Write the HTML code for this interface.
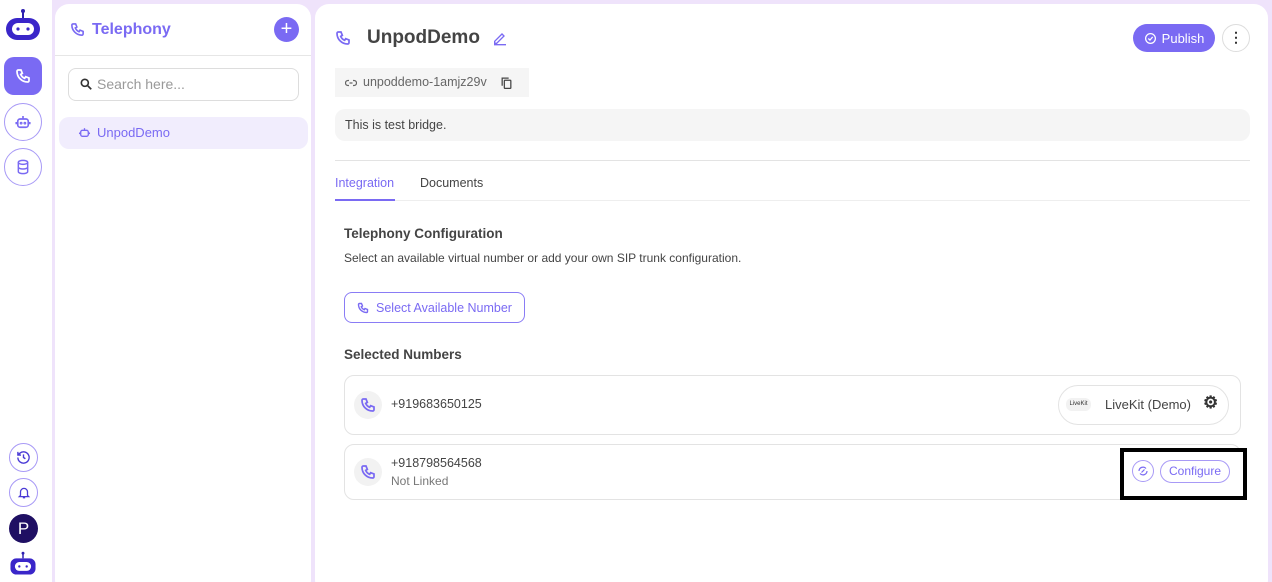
<!DOCTYPE html><html><head><style>
*{box-sizing:border-box;margin:0;padding:0}
html,body{width:1272px;height:582px;overflow:hidden}
body{background:#efe3fb;font-family:"Liberation Sans",sans-serif;position:relative;color:#333}
.a{position:absolute}
.rail{left:0;top:0;width:52px;height:582px;background:#fff}
.circ{border:1.5px solid #a89af6;border-radius:50%;background:#fff;display:flex;align-items:center;justify-content:center}
.panel{background:#fff;border-radius:14px}
svg{display:block}
</style></head><body>
<div class="a rail"></div>
<svg class="a" style="left:4px;top:8px" width="38" height="34" viewBox="0 0 38 34"><line x1="19" y1="2" x2="19" y2="10" stroke="#2d1fb0" stroke-width="2"/><circle cx="19" cy="3" r="2" fill="#2d1fb0"/><rect x="2" y="10" width="34" height="22" rx="11" fill="#3a26c9"/><rect x="8" y="15" width="22" height="12" rx="6" fill="#fff"/><circle cx="14" cy="21" r="1.6" fill="#3a26c9"/><circle cx="24" cy="21" r="1.6" fill="#3a26c9"/></svg>
<div class="a" style="left:4px;top:57px;width:38px;height:38px;border-radius:10px;background:#7a6af3;display:flex;align-items:center;justify-content:center"><svg width="16" height="16" viewBox="0 0 24 24" fill="none" stroke="#fff" stroke-width="2.6"><path d="M5 3h4l2 5-2.5 1.5a11 11 0 0 0 6 6L16 13l5 2v4a2 2 0 0 1-2 2A16 16 0 0 1 3 5a2 2 0 0 1 2-2"/></svg></div>
<div class="a circ" style="left:4px;top:103px;width:38px;height:38px"><svg width="18" height="18" viewBox="0 0 24 24" fill="none" stroke="#7a6af3" stroke-width="2.2"><rect x="5" y="8" width="14" height="11" rx="3"/><line x1="12" y1="4" x2="12" y2="8"/><circle cx="9.5" cy="13.5" r=".8"/><circle cx="14.5" cy="13.5" r=".8"/><line x1="3" y1="12" x2="3" y2="15"/><line x1="21" y1="12" x2="21" y2="15"/></svg></div>
<div class="a circ" style="left:4px;top:148px;width:38px;height:38px"><svg width="16" height="18" viewBox="0 0 24 24" fill="none" stroke="#7a6af3" stroke-width="2.2"><ellipse cx="12" cy="5" rx="7" ry="3"/><path d="M5 5v14c0 1.7 3 3 7 3s7-1.3 7-3V5M5 12c0 1.7 3 3 7 3s7-1.3 7-3"/></svg></div>
<div class="a circ" style="left:9px;top:443px;width:29px;height:29px"><svg width="15" height="15" viewBox="0 0 24 24" fill="none" stroke="#4b3bd6" stroke-width="2.2"><path d="M3 12a9 9 0 1 0 3-6.7L3 8M3 3v5h5M12 7v5l3 2"/></svg></div>
<div class="a circ" style="left:9px;top:478px;width:29px;height:29px"><svg width="14" height="15" viewBox="0 0 24 24" fill="none" stroke="#4b3bd6" stroke-width="2.2"><path d="M6 17V11a6 6 0 0 1 12 0v6l2 2H4zM10 21h4"/></svg></div>
<div class="a" style="left:9px;top:514px;width:29px;height:29px;border-radius:50%;background:#1f0f63;color:#fff;font-size:17px;display:flex;align-items:center;justify-content:center">P</div>
<svg class="a" style="left:9px;top:550px" width="28" height="27" viewBox="0 0 38 34"><line x1="19" y1="2" x2="19" y2="10" stroke="#2d1fb0" stroke-width="2"/><circle cx="19" cy="3" r="2" fill="#2d1fb0"/><rect x="2" y="10" width="34" height="22" rx="8" fill="#3a26c9"/><rect x="8" y="15" width="22" height="12" rx="6" fill="#fff"/><circle cx="14" cy="21" r="1.6" fill="#3a26c9"/><circle cx="24" cy="21" r="1.6" fill="#3a26c9"/></svg>

<div class="a panel" style="left:55px;top:4px;width:256px;height:590px"></div>
<svg class="a" style="left:70px;top:22px" width="15" height="15" viewBox="0 0 24 24" fill="none" stroke="#7a6af3" stroke-width="2.6"><path d="M5 3h4l2 5-2.5 1.5a11 11 0 0 0 6 6L16 13l5 2v4a2 2 0 0 1-2 2A16 16 0 0 1 3 5a2 2 0 0 1 2-2"/></svg>
<div class="a" style="left:92px;top:21px;font-size:16px;font-weight:bold;color:#7a6af3">Telephony</div>
<div class="a" style="left:274px;top:17px;width:25px;height:25px;border-radius:50%;background:#7a6af3;color:#fff;font-size:20px;line-height:24px;text-align:center">+</div>
<div class="a" style="left:55px;top:55px;width:256px;height:1px;background:#e6e6e6"></div>
<div class="a" style="left:68px;top:68px;width:231px;height:33px;border:1px solid #ddd;border-radius:8px"></div>
<svg class="a" style="left:79px;top:77px" width="14" height="14" viewBox="0 0 24 24" fill="none" stroke="#333" stroke-width="2.8"><circle cx="10" cy="10" r="6"/><line x1="15" y1="15" x2="21" y2="21"/></svg>
<div class="a" style="left:97px;top:76px;font-size:14px;color:#999">Search here...</div>
<div class="a" style="left:59px;top:117px;width:249px;height:32px;border-radius:10px;background:#f1edfd"></div>
<svg class="a" style="left:78px;top:126px" width="13" height="13" viewBox="0 0 24 24" fill="none" stroke="#7a6af3" stroke-width="2.4"><rect x="5" y="8" width="14" height="11" rx="3"/><line x1="12" y1="4" x2="12" y2="8"/><line x1="3" y1="12" x2="3" y2="15"/><line x1="21" y1="12" x2="21" y2="15"/></svg>
<div class="a" style="left:97px;top:125px;font-size:13px;color:#7a6af3">UnpodDemo</div>

<div class="a panel" style="left:315px;top:4px;width:953px;height:590px"></div>
<svg class="a" style="left:335px;top:30px" width="16" height="16" viewBox="0 0 24 24" fill="none" stroke="#7a6af3" stroke-width="2.6"><path d="M5 3h4l2 5-2.5 1.5a11 11 0 0 0 6 6L16 13l5 2v4a2 2 0 0 1-2 2A16 16 0 0 1 3 5a2 2 0 0 1 2-2"/></svg>
<div class="a" style="left:367px;top:27px;font-size:19px;font-weight:bold;color:#444">UnpodDemo</div>
<svg class="a" style="left:492px;top:30px" width="16" height="16" viewBox="0 0 24 24" fill="none" stroke="#7a6af3" stroke-width="2"><path d="M4 17l11-11 3 3-11 11H4zM3 22h18"/></svg>
<div class="a" style="left:1133px;top:24px;width:82px;height:28px;border-radius:14px;background:#7a6af3;color:#fff;font-size:13px;display:flex;align-items:center;justify-content:center;gap:5px"><svg width="13" height="13" viewBox="0 0 24 24" fill="none" stroke="#fff" stroke-width="2.3"><circle cx="12" cy="12" r="9"/><path d="M8 12l3 3 5-6"/></svg>Publish</div>
<div class="a" style="left:1222px;top:24px;width:28px;height:28px;border-radius:50%;border:1px solid #ddd;font-size:14px;text-align:center;line-height:24px;font-weight:bold">⋮</div>
<div class="a" style="left:335px;top:68px;width:194px;height:29px;background:#f5f5f5"></div>
<svg class="a" style="left:345px;top:77px" width="12" height="12" viewBox="0 0 24 24" fill="none" stroke="#666" stroke-width="2.5"><path d="M9 12h6M8 7H6a5 5 0 0 0 0 10h2M16 7h2a5 5 0 0 1 0 10h-2"/></svg>
<div class="a" style="left:363px;top:75px;font-size:12.5px;color:#666">unpoddemo-1amjz29v</div>
<svg class="a" style="left:500px;top:76px" width="13" height="14" viewBox="0 0 24 24" fill="none" stroke="#444" stroke-width="2.3"><rect x="8" y="7" width="12" height="15" rx="1"/><path d="M4 17V3h12"/></svg>
<div class="a" style="left:335px;top:109px;width:915px;height:32px;border-radius:10px;background:#f5f5f5"></div>
<div class="a" style="left:345px;top:118px;font-size:12.5px;color:#444">This is test bridge.</div>
<div class="a" style="left:335px;top:160px;width:915px;height:1px;background:#e3e3e3"></div>
<div class="a" style="left:335px;top:176px;font-size:12.5px;color:#7a6af3">Integration</div>
<div class="a" style="left:420px;top:176px;font-size:12.5px;color:#444">Documents</div>
<div class="a" style="left:335px;top:200px;width:915px;height:1px;background:#eee"></div>
<div class="a" style="left:335px;top:199px;width:60px;height:2px;background:#7a6af3"></div>
<div class="a" style="left:344px;top:226px;font-size:13.5px;font-weight:bold;color:#444">Telephony Configuration</div>
<div class="a" style="left:344px;top:251px;font-size:12px;color:#444">Select an available virtual number or add your own SIP trunk configuration.</div>
<div class="a" style="left:344px;top:292px;width:181px;height:31px;border:1px solid #8a7cf5;border-radius:8px;color:#7a6af3;font-size:12.5px;display:flex;align-items:center;justify-content:center;gap:7px"><svg width="12" height="12" viewBox="0 0 24 24" fill="none" stroke="#7a6af3" stroke-width="2.8"><path d="M5 3h4l2 5-2.5 1.5a11 11 0 0 0 6 6L16 13l5 2v4a2 2 0 0 1-2 2A16 16 0 0 1 3 5a2 2 0 0 1 2-2"/></svg>Select Available Number</div>
<div class="a" style="left:344px;top:347px;font-size:13.5px;font-weight:bold;color:#444">Selected Numbers</div>
<div class="a" style="left:344px;top:375px;width:897px;height:60px;border:1px solid #e3e3e3;border-radius:10px"></div>
<div class="a" style="left:354px;top:391px;width:28px;height:28px;border-radius:50%;background:#f2f2f2;display:flex;align-items:center;justify-content:center"><svg width="16" height="16" viewBox="0 0 24 24" fill="none" stroke="#7a6af3" stroke-width="2.6"><path d="M5 3h4l2 5-2.5 1.5a11 11 0 0 0 6 6L16 13l5 2v4a2 2 0 0 1-2 2A16 16 0 0 1 3 5a2 2 0 0 1 2-2"/></svg></div>
<div class="a" style="left:391px;top:397px;font-size:12.5px;color:#444">+919683650125</div>
<div class="a" style="left:1058px;top:385px;width:171px;height:40px;border:1px solid #e3e3e3;border-radius:20px"></div>
<div class="a" style="left:1066px;top:398px;width:25px;height:13px;background:#f2f2f2;border-radius:6px;font-size:6px;line-height:13px;text-align:center;color:#333">LiveKit</div>
<div class="a" style="left:1105px;top:397px;font-size:13px;color:#444">LiveKit (Demo)</div>
<div class="a" style="left:1203px;top:393px;font-size:17px;font-weight:bold;color:#333">⚙</div>
<div class="a" style="left:344px;top:444px;width:897px;height:56px;border:1px solid #e3e3e3;border-radius:10px"></div>
<div class="a" style="left:354px;top:458px;width:28px;height:28px;border-radius:50%;background:#f2f2f2;display:flex;align-items:center;justify-content:center"><svg width="16" height="16" viewBox="0 0 24 24" fill="none" stroke="#7a6af3" stroke-width="2.6"><path d="M5 3h4l2 5-2.5 1.5a11 11 0 0 0 6 6L16 13l5 2v4a2 2 0 0 1-2 2A16 16 0 0 1 3 5a2 2 0 0 1 2-2"/></svg></div>
<div class="a" style="left:391px;top:456px;font-size:12.5px;color:#444">+918798564568</div>
<div class="a" style="left:391px;top:474px;font-size:12px;color:#777">Not Linked</div>
<div class="a" style="left:1120px;top:448px;width:127px;height:52px;border:4px solid #000;background:#fff"></div>
<div class="a circ" style="left:1132px;top:460px;width:22px;height:22px"><svg width="12" height="12" viewBox="0 0 24 24" fill="none" stroke="#7a6af3" stroke-width="2.4"><path d="M4 12a8 8 0 0 1 14-5M20 12a8 8 0 0 1-14 5M9 15l6-6"/></svg></div>
<div class="a" style="left:1160px;top:460px;width:70px;height:23px;border:1.5px solid #a89af6;border-radius:12px;color:#7a6af3;font-size:12px;text-align:center;line-height:20px">Configure</div>
</body></html>
